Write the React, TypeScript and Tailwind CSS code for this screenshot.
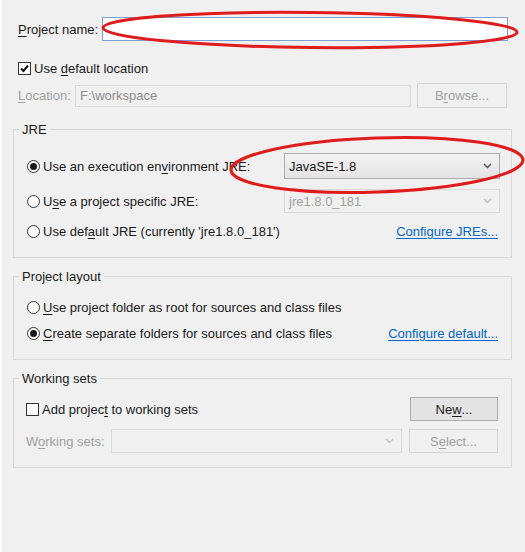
import React from "react";

function U({ children }: { children: React.ReactNode }) {
  return <span className="underline underline-offset-2">{children}</span>;
}

function Chevron({ disabled = false }: { disabled?: boolean }) {
  return (
    <svg width="9" height="6" viewBox="0 0 9 6" className="shrink-0">
      <path
        d="M1 1 L4.5 4.5 L8 1"
        fill="none"
        stroke={disabled ? "#c4c4c4" : "#5a5a5a"}
        strokeWidth="1.5"
      />
    </svg>
  );
}

function Radio({ checked = false }: { checked?: boolean }) {
  return (
    <span className="flex h-[13px] w-[13px] shrink-0 items-center justify-center rounded-full border border-[#333] bg-white">
      {checked && <span className="h-[7px] w-[7px] rounded-full bg-[#1a1a1a]" />}
    </span>
  );
}

function Checkbox({ checked = false }: { checked?: boolean }) {
  return (
    <span className="flex h-[13px] w-[13px] shrink-0 items-center justify-center border border-[#333] bg-white">
      {checked && (
        <svg width="11" height="11" viewBox="0 0 11 11">
          <path d="M2 5.5 L4.5 8 L9 2.5" fill="none" stroke="#111" strokeWidth="2" />
        </svg>
      )}
    </span>
  );
}

export default function App() {
  return (
    <div
      className="relative h-[552px] w-[525px] overflow-hidden border-l-2 border-white bg-[#f0f0f0] text-[13px] leading-[15px] text-[#1a1a1a]"
      style={{ fontFamily: '"Liberation Sans", Arial, sans-serif' }}
    >
      <div className="pl-[16px] pr-[17px] pt-[17px]">
        {/* Project name */}
        <div className="flex h-[24px] items-center">
          <span className="w-[84px] shrink-0">
            <U>P</U>roject name:
          </span>
          <div className="h-[24px] flex-1 border border-[#7aa0d4] bg-white" />
        </div>

        {/* Default location */}
        <div className="mt-[21px] flex h-[13px] items-center gap-[3px]">
          <Checkbox checked />
          <span>
            Use <U>d</U>efault location
          </span>
        </div>

        {/* Location */}
        <div className="mt-[8px] flex h-[25px] items-center">
          <span className="w-[57px] shrink-0 text-[#a0a0a0]">
            <U>L</U>ocation:
          </span>
          <div className="flex h-[22px] w-[336px] items-center border border-[#d9d9d9] bg-[#f0f0f0] px-[4px] text-[#8d8d8d]">
            F:\workspace
          </div>
          <div className="ml-[6px] flex h-[25px] w-[90px] items-center justify-center border border-[#d5d5d5] bg-[#f0f0f0] text-[#a0a0a0]">
            B<U>r</U>owse...
          </div>
        </div>
      </div>

      {/* JRE group */}
      <fieldset className="ml-[11px] mr-[13px] mt-[14px] border border-[#d8d8d8] p-0">
        <legend className="ml-[5px] px-[3px] leading-[15px]">JRE</legend>
        <div className="pb-[14px] pl-[13px] pr-[11px] pt-[16px]">
          <div className="flex h-[26px] items-center">
            <Radio checked />
            <span className="ml-[3px]">
              Use an execution en<U>v</U>ironment JRE:
            </span>
            <div className="ml-auto flex h-[26px] w-[216px] items-center justify-between border border-[#acacac] bg-gradient-to-b from-[#f2f2f2] to-[#e4e4e4] pl-[4px] pr-[7px]">
              <span>JavaSE-1.8</span>
              <Chevron />
            </div>
          </div>
          <div className="mt-[10px] flex h-[24px] items-center">
            <Radio />
            <span className="ml-[3px]">
              U<U>s</U>e a project specific JRE:
            </span>
            <div className="ml-auto flex h-[24px] w-[216px] items-center justify-between border border-[#d9d9d9] bg-[#f0f0f0] pl-[4px] pr-[7px] text-[#a0a0a0]">
              <span>jre1.8.0_181</span>
              <Chevron disabled />
            </div>
          </div>
          <div className="mt-[6px] flex h-[24px] items-center">
            <Radio />
            <span className="ml-[3px]">
              Use def<U>a</U>ult JRE (currently 'jre1.8.0_181')
            </span>
            <span className="ml-auto mr-[2px] text-[#0066cc] underline underline-offset-2">
              Configure JREs...
            </span>
          </div>
        </div>
      </fieldset>

      {/* Project layout group */}
      <fieldset className="ml-[11px] mr-[13px] mt-[11px] border border-[#d8d8d8] p-0">
        <legend className="ml-[5px] px-[3px] leading-[15px]">Project layout</legend>
        <div className="pb-[16px] pl-[13px] pr-[11px] pt-[13px]">
          <div className="flex h-[20px] items-center">
            <Radio />
            <span className="ml-[3px]">
              <U>U</U>se project folder as root for sources and class files
            </span>
          </div>
          <div className="mt-[6px] flex h-[20px] items-center">
            <Radio checked />
            <span className="ml-[3px]">
              <U>C</U>reate separate folders for sources and class files
            </span>
            <span className="ml-auto mr-[2px] text-[#0066cc] underline underline-offset-2">
              Configure default...
            </span>
          </div>
        </div>
      </fieldset>

      {/* Working sets group */}
      <fieldset className="ml-[11px] mr-[13px] mt-[11px] border border-[#d8d8d8] p-0">
        <legend className="ml-[5px] px-[3px] leading-[15px]">Working sets</legend>
        <div className="pb-[14px] pl-[12px] pr-[13px] pt-[11px]">
          <div className="flex h-[24px] items-center">
            <Checkbox />
            <span className="ml-[3px]">
              Add projec<U>t</U> to working sets
            </span>
            <div className="ml-auto flex h-[24px] w-[88px] items-center justify-center border border-[#adadad] bg-[#e3e3e3]">
              Ne<U>w</U>...
            </div>
          </div>
          <div className="mt-[8px] flex h-[24px] items-center">
            <span className="w-[85px] shrink-0 text-[#a0a0a0]">
              W<U>o</U>rking sets:
            </span>
            <div className="flex h-[24px] w-[291px] items-center justify-end border border-[#d9d9d9] bg-[#f0f0f0] pr-[7px]">
              <Chevron disabled />
            </div>
            <div className="ml-[7px] flex h-[24px] w-[89px] items-center justify-center border border-[#d5d5d5] bg-[#f0f0f0] text-[#a0a0a0]">
              S<U>e</U>lect...
            </div>
          </div>
        </div>
      </fieldset>

      {/* red annotation ellipses */}
      <svg
        className="pointer-events-none absolute left-[-2px] top-0"
        width="525"
        height="552"
        viewBox="0 0 525 552"
      >
        <ellipse
          cx="310"
          cy="30"
          rx="207"
          ry="17.5"
          fill="none"
          stroke="#e01b1b"
          strokeWidth="3"
          transform="rotate(0.6 310 30)"
        />
        <ellipse
          cx="377"
          cy="165"
          rx="146"
          ry="27"
          fill="none"
          stroke="#e01b1b"
          strokeWidth="3"
          transform="rotate(-2 377 165)"
        />
      </svg>
    </div>
  );
}
